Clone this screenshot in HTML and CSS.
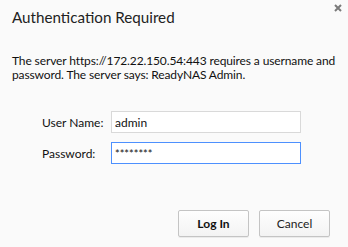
FILE: index.html
```html
<!DOCTYPE html>
<html>
<head>
<meta charset="utf-8">
<link rel="stylesheet" href="styles.css">
</head>
<body>
<div class="dialog">
  <div class="header">
    <h1 class="title">Authentication Required</h1>
    <button class="close" aria-label="Close">
      <svg width="8" height="8" viewBox="0 0 8 8"><path d="M1 1L7 7M7 1L1 7" stroke="#7a7a7a" stroke-width="2"/></svg>
    </button>
  </div>
  <p class="message">The server https://172.22.150.54:443 requires a username and password. The server says: ReadyNAS Admin.</p>
  <div class="form">
    <label class="label" for="u">User Name:</label>
    <input class="field" id="u" type="text" value="admin">
    <label class="label" for="p">Password:</label>
    <input class="field focused" id="p" type="text" value="********">
  </div>
  <div class="buttons">
    <button class="btn primary">Log In</button>
    <button class="btn">Cancel</button>
  </div>
</div>
</body>
</html>
```
FILE: styles.css
```css
html, body {
  margin: 0;
  padding: 0;
  background: #fafafa;
}
body {
  width: 348px;
  height: 247px;
  overflow: hidden;
  font-family: Lato, "Open Sans", sans-serif;
  color: #111;
}
.dialog {
  padding: 0 6px 0 12px;
}
.header {
  display: flex;
  justify-content: space-between;
  align-items: flex-start;
}
.title {
  margin: 6px 0 0 0;
  font-size: 15.2px;
  font-weight: normal;
  line-height: 22px;
  color: #222;
}
.close {
  border: 0;
  background: none;
  padding: 0;
  margin: 4px 0 0 0;
  width: 8px;
  height: 8px;
  display: flex;
}
.message {
  margin: 26px 0 0 0;
  font-size: 12px;
  line-height: 14px;
  letter-spacing: -0.12px;
  color: #111;
}
.form {
  display: grid;
  grid-template-columns: 69px 190px;
  row-gap: 9px;
  margin: 29px 0 0 30px;
  align-items: center;
}
.label {
  font-size: 12px;
  color: #111;
}
.field {
  box-sizing: border-box;
  width: 190px;
  height: 22px;
  border: 1px solid #d9d9d9;
  background: #fff;
  font-family: inherit;
  font-size: 12px;
  padding: 0 3px;
  color: #111;
  outline: none;
  margin: 0;
}
.field.focused {
  border-color: #4d90fe;
  font-size: 11px;
}
.buttons {
  display: flex;
  justify-content: flex-end;
  gap: 10px;
  margin: 46px 12px 0 0;
}
.btn {
  box-sizing: border-box;
  width: 71px;
  height: 27px;
  border: 1px solid #c4c4c4;
  border-radius: 2px;
  background: linear-gradient(#fefefe, #f3f3f3);
  box-shadow: 0 1px 0 rgba(0,0,0,0.06);
  font-family: inherit;
  font-size: 12px;
  color: #222;
  padding: 0;
}
.btn.primary {
  font-weight: bold;
  color: #111;
}
```
